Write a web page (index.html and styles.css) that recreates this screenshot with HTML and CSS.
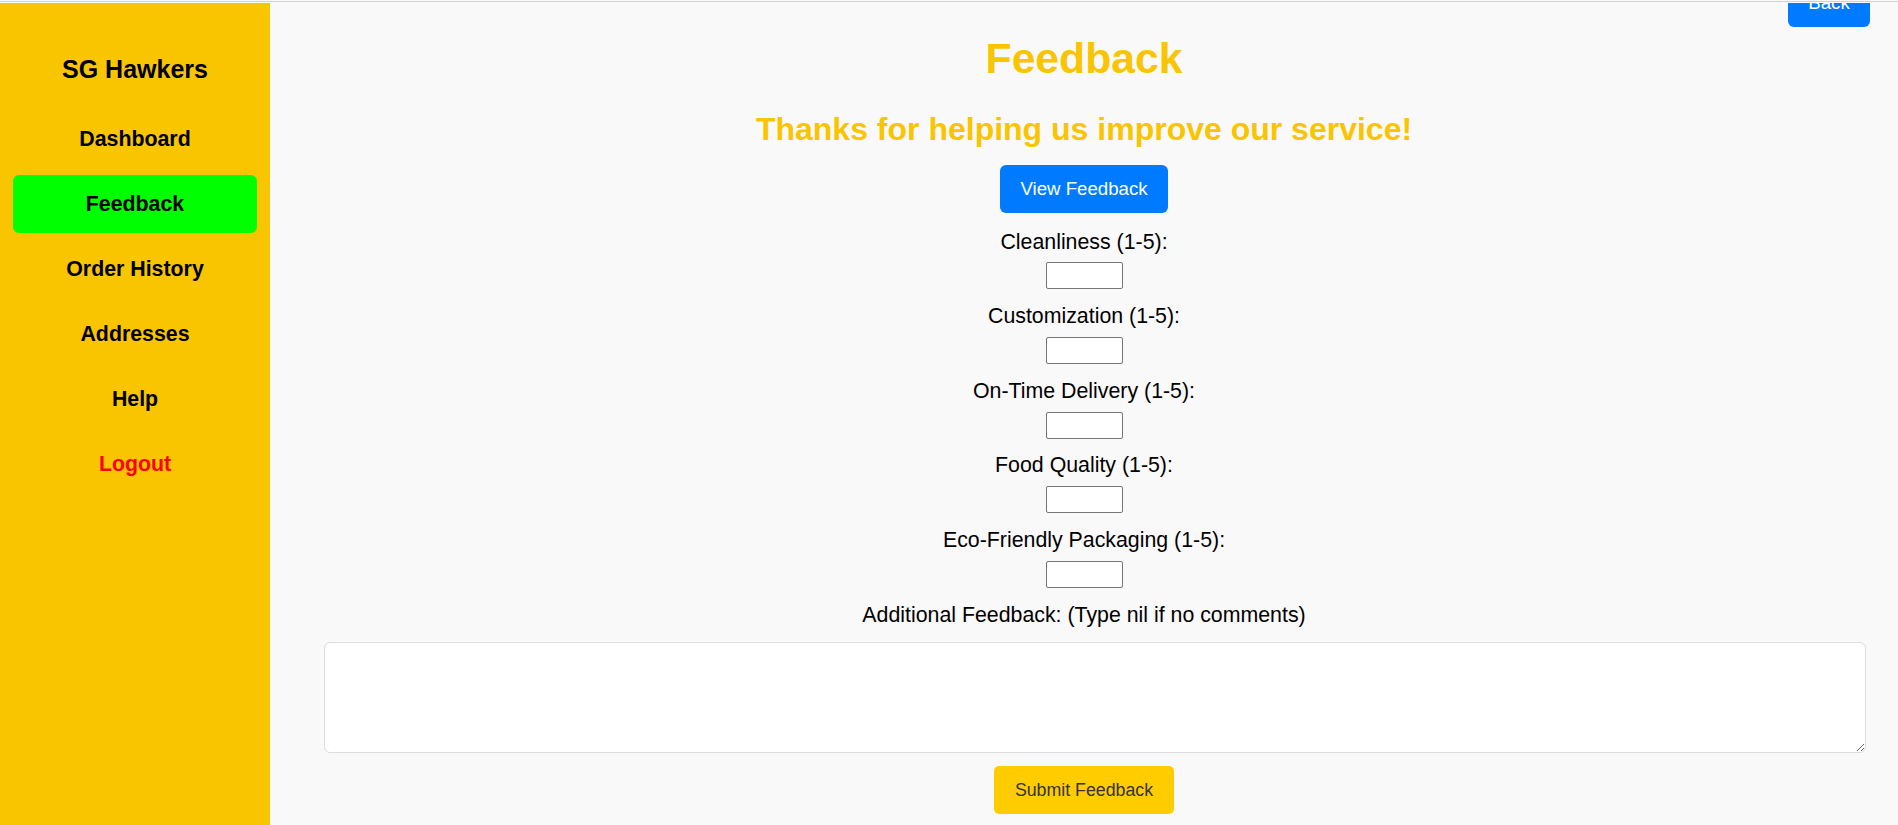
FILE: index.html
```html
<!DOCTYPE html>
<html lang="en">
<head>
<meta charset="utf-8">
<title>Feedback - SG Hawkers</title>
<link rel="stylesheet" href="styles.css">
</head>
<body>
<div class="topline"></div>
<div class="layout">
  <aside class="sidebar">
    <h2 class="brand">SG Hawkers</h2>
    <nav class="nav">
      <a class="nav-link" href="#">Dashboard</a>
      <a class="nav-link active" href="#">Feedback</a>
      <a class="nav-link" href="#">Order History</a>
      <a class="nav-link" href="#">Addresses</a>
      <a class="nav-link" href="#">Help</a>
      <a class="nav-link logout" href="#">Logout</a>
    </nav>
  </aside>
  <main class="main">
    <button class="back-btn" type="button">Back</button>
    <h1 class="title">Feedback</h1>
    <h2 class="subtitle">Thanks for helping us improve our service!</h2>
    <button class="view-btn" type="button">View Feedback</button>
    <form class="form">
      <label class="field-label">Cleanliness (1-5):</label>
      <input class="rating" type="text">
      <label class="field-label">Customization (1-5):</label>
      <input class="rating" type="text">
      <label class="field-label">On-Time Delivery (1-5):</label>
      <input class="rating" type="text">
      <label class="field-label">Food Quality (1-5):</label>
      <input class="rating" type="text">
      <label class="field-label">Eco-Friendly Packaging (1-5):</label>
      <input class="rating" type="text">
      <label class="field-label">Additional Feedback: (Type nil if no comments)</label>
      <textarea class="comments"></textarea>
      <button class="submit-btn" type="button">Submit Feedback</button>
    </form>
  </main>
</div>
</body>
</html>
```

FILE: styles.css
```css
html, body {
  margin: 0;
  padding: 0;
}

body {
  background: #f9f9f9;
  font-family: "Liberation Sans", Arial, sans-serif;
  color: #000;
  overflow: hidden;
}

.topline {
  height: 1px;
  margin: 1px 0;
  background: #d2d2d2;
}

.layout {
  display: flex;
  height: calc(100vh - 3px);
}

.sidebar {
  width: 270px;
  flex: none;
  box-sizing: border-box;
  background: #f9c500;
  padding: 52px 13px 0;
}

.brand {
  margin: 0 0 26px;
  font-size: 25px;
  line-height: 29px;
  font-weight: bold;
  text-align: center;
}

.nav {
  display: flex;
  flex-direction: column;
  gap: 7px;
}

.nav-link {
  display: block;
  height: 58px;
  line-height: 58px;
  text-align: center;
  font-size: 21.33px;
  font-weight: bold;
  color: #000;
  text-decoration: none;
  border-radius: 6px;
}

.nav-link.active {
  background: #00ff00;
}

.nav-link.logout {
  color: #ff0000;
}

.main {
  flex: 1;
  position: relative;
  overflow: hidden;
  padding: 31px 54px 0;
  text-align: center;
}

.back-btn {
  position: absolute;
  top: -24px;
  right: 28px;
  width: 82px;
  height: 48px;
  border: none;
  border-radius: 6px;
  background: #007bff;
  color: #fff;
  font-family: "Liberation Sans", Arial, sans-serif;
  font-size: 18.67px;
  padding: 0;
}

.title {
  margin: 0;
  font-size: 42.67px;
  line-height: 48px;
  font-weight: bold;
  color: #f9c500;
}

.subtitle {
  margin: 29px 0 0;
  font-size: 32px;
  line-height: 36px;
  font-weight: bold;
  color: #f9c500;
}

.view-btn {
  display: block;
  margin: 18px auto 0;
  height: 48px;
  padding: 0 20px;
  border: none;
  border-radius: 6px;
  background: #007bff;
  color: #fff;
  font-family: "Liberation Sans", Arial, sans-serif;
  font-size: 18.67px;
}

.form {
  margin-top: 16.7px;
  display: flex;
  flex-direction: column;
  align-items: center;
}

.field-label {
  display: block;
  font-size: 21.33px;
  line-height: 24px;
}

.rating {
  display: block;
  box-sizing: border-box;
  width: 77px;
  height: 27px;
  margin: 8.7px 0 14.9px;
  border: 1px solid #767676;
  border-radius: 2px;
  background: #fff;
  padding: 0 4px;
}

.comments {
  display: block;
  align-self: stretch;
  box-sizing: content-box;
  width: 100%;
  height: 89.5px;
  margin-top: 15.3px;
  padding: 10px;
  border: 1px solid #dddddd;
  border-radius: 6px;
  background: #fff;
  font-family: "Liberation Sans", Arial, sans-serif;
}

.submit-btn {
  display: block;
  margin-top: 13px;
  height: 48px;
  padding: 0 21px;
  border: none;
  border-radius: 5px;
  background: #ffcc00;
  color: #333;
  font-family: "Liberation Sans", Arial, sans-serif;
  font-size: 17.78px;
}
```
